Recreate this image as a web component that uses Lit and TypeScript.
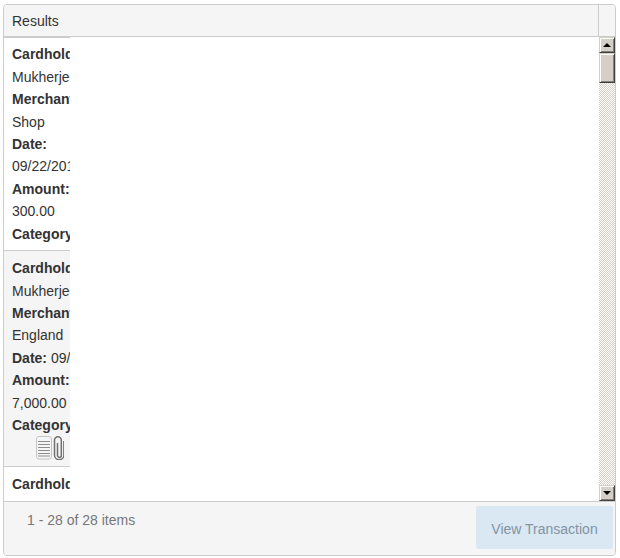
import { css, html, LitElement, svg } from "lit";
import { customElement } from "lit/decorators.js";

type Line = { text: string; bold?: boolean; label?: string };

const rows: { lines: Line[]; icon?: boolean }[] = [
  {
    lines: [
      { text: "Cardholder:", bold: true },
      { text: "Mukherjee" },
      { text: "Merchant:", bold: true },
      { text: "Shop" },
      { text: "Date:", bold: true },
      { text: "09/22/2014" },
      { text: "Amount:", bold: true },
      { text: "300.00" },
      { text: "Category:", bold: true },
    ],
  },
  {
    lines: [
      { text: "Cardholder:", bold: true },
      { text: "Mukherjee" },
      { text: "Merchant:", bold: true },
      { text: "England" },
      { label: "Date:", text: " 09/23/2014" },
      { text: "Amount:", bold: true },
      { text: "7,000.00" },
      { text: "Category:", bold: true },
    ],
    icon: true,
  },
  { lines: [{ text: "Cardholder:", bold: true }] },
];

const noteIcon = svg`
  <rect x="0.5" y="0.5" width="15" height="22.5" rx="2.5" fill="#f6f6f6" stroke="#c4c4c4" />
  <path d="M2 5.5h12M2 8.5h12M2 11.5h12M2 14.5h12M2 17.5h12M2 20h12" stroke="#8c8c8c" stroke-width="1" fill="none" />
  <path d="M21.5 7v12.5a1.9 1.9 0 0 0 3.8 0V4.2a3.4 3.4 0 0 0-6.8 0V19a4.7 4.7 0 0 0 9.4 0V5" stroke="#707070" stroke-width="1.5" fill="none" />
`;

@customElement("app-root")
export class AppRoot extends LitElement {
  static styles = css`
    :host {
      display: block;
      padding: 4px 3px 0;
      font-family: "Liberation Sans", Arial, sans-serif;
      font-size: 14px;
      line-height: 22.4px;
      color: #333;
    }
    .grid {
      width: 613px;
      height: 552px;
      box-sizing: border-box;
      border: 1px solid #ccc;
      border-radius: 4px;
      display: flex;
      flex-direction: column;
      overflow: hidden;
      background: #fff;
    }
    .head {
      height: 32px;
      flex: none;
      box-sizing: border-box;
      display: flex;
      background: #f5f5f5;
      border-bottom: 1px solid #ccc;
    }
    .head-title {
      flex: 1;
      padding: 5px 8px 0;
    }
    .head-gutter {
      width: 16px;
      border-left: 1px solid #ccc;
    }
    .body {
      flex: 1;
      min-height: 0;
      display: flex;
    }
    .frozen {
      width: 66px;
      flex: none;
      overflow: hidden;
      border-top: 1px solid #ccc;
    }
    .row {
      padding: 6px 8px 5px;
      border-bottom: 1px solid #ccc;
    }
    .row:first-child {
      padding-top: 5.4px;
    }
    .row.alt {
      background: #f5f5f5;
      padding-top: 6.2px;
    }
    .row:last-child {
      border-bottom: none;
    }
    .line {
      white-space: nowrap;
    }
    .strong {
      font-weight: 700;
    }
    .icons {
      padding-left: 24px;
      height: 24.8px;
    }
    .icons svg {
      display: block;
    }
    .spacer {
      flex: 1;
    }
    .scrollbar {
      width: 16px;
      flex: none;
      display: flex;
      flex-direction: column;
      background: repeating-conic-gradient(#d4d0c8 0 25%, #fff 0 50%) 0 0 / 2px 2px;
    }
    .sb-btn,
    .sb-thumb {
      box-sizing: border-box;
      width: 16px;
      flex: none;
      background: #d4d0c8;
      border: 1px solid;
      border-color: #d4d0c8 #404040 #404040 #d4d0c8;
      box-shadow:
        inset 1px 1px 0 #fff,
        inset -1px -1px 0 #808080;
    }
    .sb-btn {
      height: 16px;
      display: flex;
      align-items: center;
      justify-content: center;
    }
    .sb-thumb {
      height: 30px;
    }
    .sb-fill {
      flex: 1;
    }
    .arrow {
      width: 0;
      height: 0;
      border-left: 4px solid transparent;
      border-right: 4px solid transparent;
    }
    .arrow.up {
      border-bottom: 4px solid #000;
    }
    .arrow.down {
      border-top: 4px solid #000;
    }
    .foot {
      height: 54px;
      flex: none;
      box-sizing: border-box;
      display: flex;
      justify-content: space-between;
      align-items: flex-start;
      background: #f5f5f5;
      border-top: 1px solid #ccc;
      padding: 4px 2px 0 23px;
    }
    .count {
      color: #777;
      padding-top: 3px;
    }
    .view {
      width: 137px;
      height: 43px;
      box-sizing: border-box;
      border: none;
      border-radius: 2px;
      padding: 4px 0 0;
      background: #d9e8f3;
      color: #8593a2;
      font: inherit;
    }
  `;

  render() {
    return html`
      <div class="grid">
        <div class="head">
          <div class="head-title">Results</div>
          <div class="head-gutter"></div>
        </div>
        <div class="body">
          <div class="frozen">
            ${rows.map(
              (row, i) => html`
                <div class="row ${i % 2 ? "alt" : ""}">
                  ${row.lines.map(
                    (l) => html`
                      <div class="line ${l.bold ? "strong" : ""}">
                        ${l.label
                          ? html`<span class="strong">${l.label}</span>`
                          : ""}${l.text}
                      </div>
                    `,
                  )}
                  ${row.icon
                    ? html`<div class="icons">
                        <svg width="28" height="24" viewBox="0 0 28 24">${noteIcon}</svg>
                      </div>`
                    : ""}
                </div>
              `,
            )}
          </div>
          <div class="spacer"></div>
          <div class="scrollbar">
            <div class="sb-btn"><span class="arrow up"></span></div>
            <div class="sb-thumb"></div>
            <div class="sb-fill"></div>
            <div class="sb-btn"><span class="arrow down"></span></div>
          </div>
        </div>
        <div class="foot">
          <span class="count">1 - 28 of 28 items</span>
          <button class="view">View Transaction</button>
        </div>
      </div>
    `;
  }
}
